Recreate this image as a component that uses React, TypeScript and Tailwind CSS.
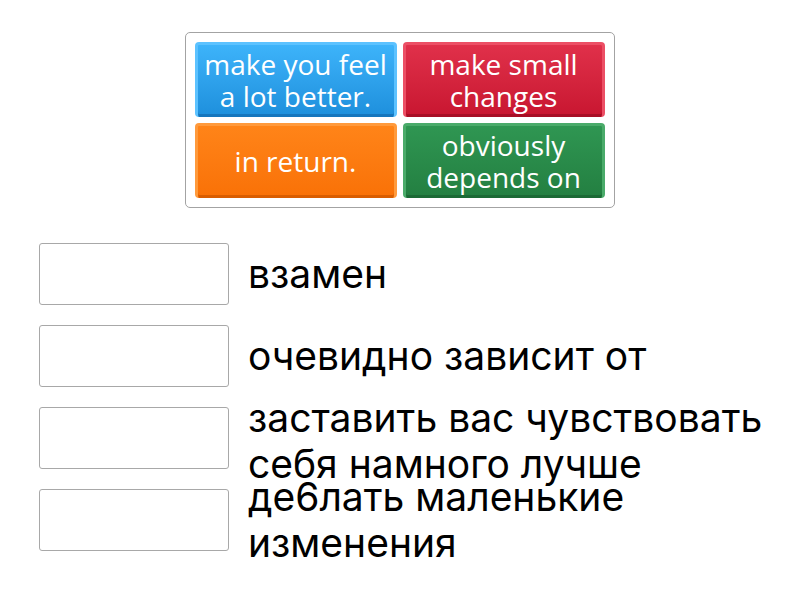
const tiles = [
  { text: "make you feel a lot better.", cls: "bg-gradient-to-b from-[#3db3fa] to-[#1d8fdc] border-[#5cc2ff] shadow-[inset_0_-3px_0_#1676bd]" },
  { text: "make small changes", cls: "bg-gradient-to-b from-[#e0304a] to-[#c81530] border-[#ec4f65] shadow-[inset_0_-3px_0_#a80e25]" },
  { text: "in return.", cls: "bg-gradient-to-b from-[#ff8418] to-[#f97106] border-[#ff9a3c] shadow-[inset_0_-3px_0_#d95d00]" },
  { text: "obviously depends on", cls: "bg-gradient-to-b from-[#2f9652] to-[#237f41] border-[#4aab6a] shadow-[inset_0_-3px_0_#1b6a35]" },
];

const answers = [
  "взамен",
  "очевидно зависит от",
  "заставить вас чувствовать себя намного лучше",
  "де6лать маленькие изменения",
];

export default function App() {
  return (
    <div className="w-[800px] h-[600px] bg-white font-['Inter',sans-serif] relative overflow-hidden">
      {/* карточки */}
      <div className="flex justify-center pt-[32px]">
        <div className="ml-[-1px] w-[430px] border border-[#a3a3a3] rounded-[5px] p-[9px] grid grid-cols-2 gap-[6px]">
          {tiles.map((t) => (
            <div
              key={t.text}
              className={`h-[75px] rounded-[4px] border-[3px] border-b-0 flex items-center justify-center text-center text-white text-[28px] leading-[32px] px-[2px] pb-[3px] font-['Open_Sans',sans-serif] ${t.cls}`}
            >
              {t.text}
            </div>
          ))}
        </div>
      </div>

      {/* ответы */}
      <div className="flex flex-col gap-[20px] pl-[39px] pt-[35px]">
        {answers.map((a, i) => (
          <div key={a} className="flex items-center h-[62px]">
            <div className="w-[190px] h-[62px] border border-[#a8a8a8] rounded-[3px] shrink-0" />
            <div className={`ml-[19px] w-[530px] text-[39px] leading-[46px] text-black ${i === 2 ? "mt-[5px]" : ""}`}>{a}</div>
          </div>
        ))}
      </div>
    </div>
  );
}
